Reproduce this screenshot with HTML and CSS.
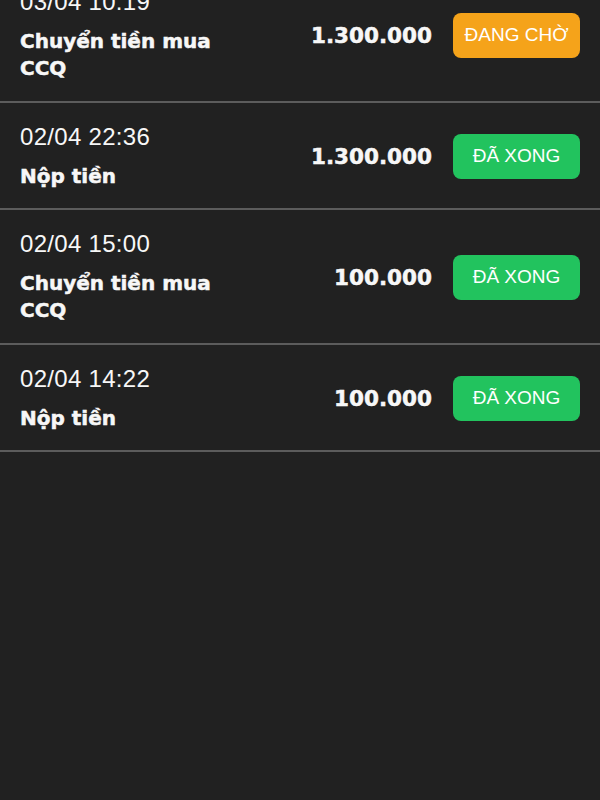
FILE: index.html
```html
<!DOCTYPE html>
<html lang="vi">
<head>
<meta charset="UTF-8" />
<meta name="viewport" content="width=device-width, initial-scale=1" />
<title>Lịch sử giao dịch</title>
<link rel="stylesheet" href="styles.css">
</head>
<body>
<div class="list">

  <div class="row">
    <div class="info">
      <div class="date">03/04 10:19</div>
      <div class="title">Chuyển tiền mua<br>CCQ</div>
    </div>
    <div class="amount">1.300.000</div>
    <div class="badge pending">ĐANG CHỜ</div>
  </div>

  <div class="row">
    <div class="info">
      <div class="date">02/04 22:36</div>
      <div class="title">Nộp tiền</div>
    </div>
    <div class="amount">1.300.000</div>
    <div class="badge done">ĐÃ XONG</div>
  </div>

  <div class="row">
    <div class="info">
      <div class="date">02/04 15:00</div>
      <div class="title">Chuyển tiền mua<br>CCQ</div>
    </div>
    <div class="amount">100.000</div>
    <div class="badge done">ĐÃ XONG</div>
  </div>

  <div class="row">
    <div class="info">
      <div class="date">02/04 14:22</div>
      <div class="title">Nộp tiền</div>
    </div>
    <div class="amount">100.000</div>
    <div class="badge done">ĐÃ XONG</div>
  </div>

</div>
</body>
</html>
```

FILE: styles.css
```css
body {
  margin: 0;
  background-color: #212121;
  color: #f7f7f7;
  font-family: "Liberation Sans", Arial, sans-serif;
  min-height: 100vh;
  overflow: hidden;
}

/* list is scrolled a bit, first row is cut at the top */
.list {
  margin-top: -32px;
}

.row {
  display: flex;
  align-items: center;
  padding: 20px 20px 18.5px 20px;
  border-bottom: 2px solid #5c5c5c;
}

.info {
  flex: 1;
}

.date {
  font-size: 24px;
  line-height: 28px;
  letter-spacing: 0.3px;
}

.title {
  margin-top: 12px;
  font-family: "DejaVu Sans", sans-serif;
  font-weight: bold;
  font-size: 20px;
  line-height: 27px;
  -webkit-text-stroke: 0.5px #f7f7f7;
}

.amount {
  font-family: "DejaVu Sans", sans-serif;
  font-weight: bold;
  font-size: 21.5px;
  margin-right: 21px;
  -webkit-text-stroke: 0.5px #f7f7f7;
}

.badge {
  width: 127px;
  height: 45px;
  border-radius: 8px;
  display: flex;
  align-items: center;
  justify-content: center;
  font-size: 19px;
  color: #ffffff;
}

.pending {
  background-color: #f5a31a;
}

.done {
  background-color: #22c35e;
}
```
